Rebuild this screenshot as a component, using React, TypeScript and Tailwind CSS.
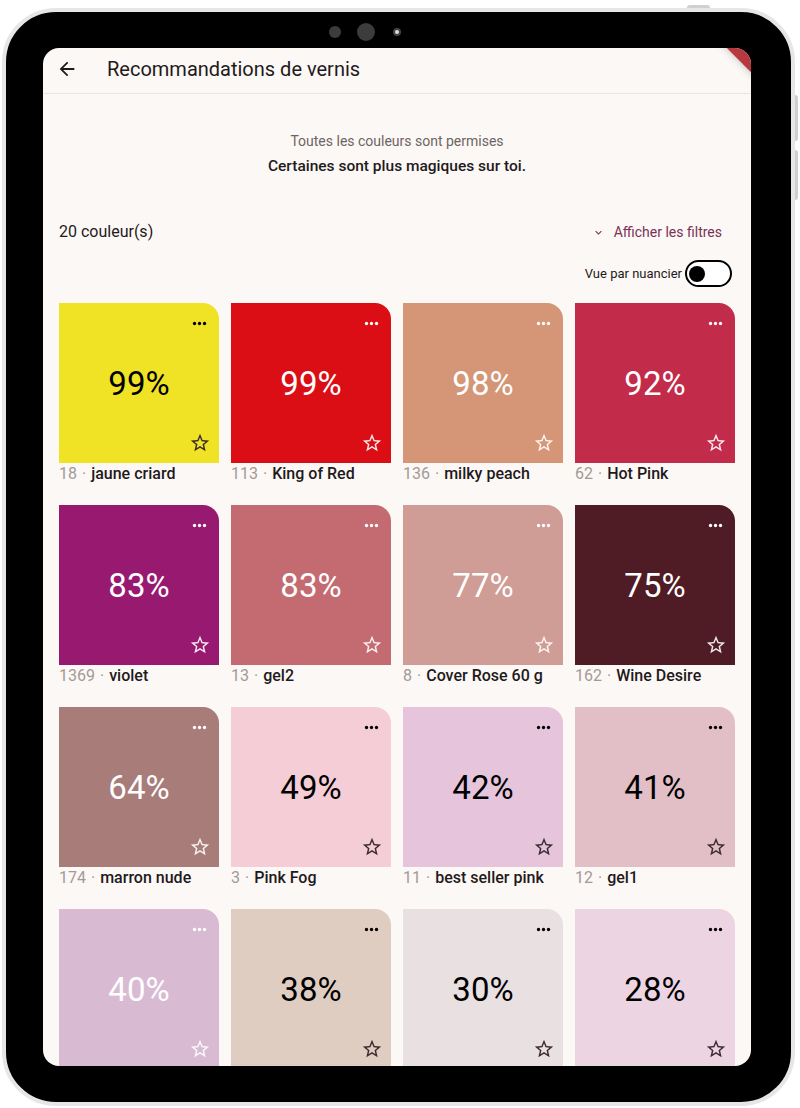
import { useState } from "react";

type Polish = {
  id?: number;
  name?: string;
  score: number;
  color: string;
  light: boolean; // white ink on the swatch
};

const polishes: Polish[] = [
  { id: 18, name: "jaune criard", score: 99, color: "#f0e326", light: false },
  { id: 113, name: "King of Red", score: 99, color: "#da0e14", light: true },
  { id: 136, name: "milky peach", score: 98, color: "#d49677", light: true },
  { id: 62, name: "Hot Pink", score: 92, color: "#c32b4b", light: true },
  { id: 1369, name: "violet", score: 83, color: "#981a70", light: true },
  { id: 13, name: "gel2", score: 83, color: "#c46b72", light: true },
  { id: 8, name: "Cover Rose 60 g", score: 77, color: "#cf9c96", light: true },
  { id: 162, name: "Wine Desire", score: 75, color: "#4f1b24", light: true },
  { id: 174, name: "marron nude", score: 64, color: "#a87c79", light: true },
  { id: 3, name: "Pink Fog", score: 49, color: "#f5cdd6", light: false },
  { id: 11, name: "best seller pink", score: 42, color: "#e5c4dc", light: false },
  { id: 12, name: "gel1", score: 41, color: "#e2bfc6", light: false },
  { score: 40, color: "#d8bbd3", light: true },
  { score: 38, color: "#dfcdc1", light: false },
  { score: 30, color: "#e9e0e1", light: false },
  { score: 28, color: "#ecd4e2", light: false },
];

function StarOutline({ className }: { className?: string }) {
  return (
    <svg viewBox="0 0 24 24" className={className} fill="currentColor">
      <path d="M22 9.24l-7.19-.62L12 2 9.19 8.63 2 9.24l5.46 4.73L5.82 21 12 17.27 18.18 21l-1.63-7.03L22 9.24zM12 15.4l-3.76 2.27 1-4.28-3.32-2.88 4.38-.38L12 6.1l1.71 4.04 4.38.38-3.32 2.88 1 4.28L12 15.4z" />
    </svg>
  );
}

function MoreDots({ className }: { className?: string }) {
  return (
    <svg viewBox="0 0 18 6" className={className} fill="currentColor">
      <circle cx="3" cy="3" r="2" />
      <circle cx="9" cy="3" r="2" />
      <circle cx="15" cy="3" r="2" />
    </svg>
  );
}

function PolishTile({ p }: { p: Polish }) {
  const ink = p.light ? "text-white" : "text-black";
  const starInk = p.light ? "text-white/90" : "text-[#3b2b30]";
  return (
    <div className="flex flex-col">
      <div
        className="relative flex h-[160px] items-center justify-center rounded-tr-[16px]"
        style={{ background: p.color }}
      >
        <span className={`text-[33px] leading-none ${ink}`}>{p.score}%</span>
        <MoreDots className={`absolute right-[11px] top-[18px] h-[5px] w-[17px] ${ink}`} />
        <StarOutline className={`absolute bottom-[9px] right-[8px] h-[22px] w-[22px] ${starInk}`} />
      </div>
      {p.name && (
        <div className="flex h-[22px] items-center text-[16px] leading-none">
          <span className="text-[#a39a97]">{p.id}</span>
          <span className="mx-[5px] text-[#a39a97]">·</span>
          <span className="font-medium text-[#1f1a1c]">{p.name}</span>
        </div>
      )}
    </div>
  );
}

export default function App() {
  const [swatchView, setSwatchView] = useState(false);

  return (
    <div className="h-[1108px] w-[800px] overflow-hidden bg-white font-['Roboto',sans-serif]">
      <div className="relative ml-[2px] mt-[8px] h-[1098px] w-[793px] rounded-[54px] border-[4px] border-[#e6e6e6] bg-black pb-[36px] pl-[37px] pr-[40px] pt-[36px]">
        {/* hardware buttons */}
        <div className="absolute -top-[7px] right-[81px] h-[3px] w-[23px] rounded-t-sm bg-[#d0d0d0]" />
        <div className="absolute -right-[7px] top-[83px] h-[46px] w-[3px] rounded-r-sm bg-[#cfcfcf]" />
        <div className="absolute -right-[7px] top-[138px] h-[50px] w-[3px] rounded-r-sm bg-[#cfcfcf]" />

        {/* front camera strip */}
        <div className="absolute left-[323px] top-[11px] flex h-[18px] items-center gap-[16px]">
          <div className="h-[12px] w-[12px] rounded-full bg-[#3c3c3c]" />
          <div className="h-[18px] w-[18px] rounded-full bg-[#3c3c3c]" />
          <div className="ml-[2px] flex h-[8px] w-[8px] items-center justify-center rounded-full bg-[#444]">
            <div className="h-[4px] w-[4px] rounded-full bg-[#ddd]" />
          </div>
        </div>

        {/* screen */}
        <div className="relative flex h-full w-full flex-col overflow-hidden rounded-[16px] bg-[#fcf8f5]">
          <div className="pointer-events-none absolute -right-[22px] -top-[8px] h-[20px] w-[60px] rotate-45 bg-[#b8383f] shadow-md" />

          <header className="flex h-[46px] shrink-0 items-center border-b border-[#ece5df] pb-[4px] pl-[13px]">
            <svg viewBox="0 0 24 24" className="h-[22px] w-[22px] text-[#1f1a1c]" fill="currentColor">
              <path d="M20 11H7.83l5.59-5.59L12 4l-8 8 8 8 1.41-1.41L7.83 13H20v-2z" />
            </svg>
            <h1 className="ml-[29px] text-[20px] text-[#1f1a1c]">Recommandations de vernis</h1>
          </header>

          <main className="flex flex-col px-[16px] pt-[38px]">
            <p className="text-center text-[14px] leading-[18px] text-[#6d6563]">
              Toutes les couleurs sont permises
            </p>
            <p className="mt-[7px] text-center text-[15.5px] font-medium leading-[18px] text-[#1f1a1c]">
              Certaines sont plus magiques sur toi.
            </p>

            <div className="mt-[45px] flex items-center justify-between">
              <span className="text-[16px] text-[#1f1a1c]">20 couleur(s)</span>
              <button className="mr-[13px] flex items-center gap-[9px] text-[14px] text-[#7b3155]">
                <svg viewBox="0 0 24 24" className="h-[13px] w-[13px]" fill="currentColor">
                  <path d="M16.59 8.59L12 13.17 7.41 8.59 6 10l6 6 6-6z" />
                </svg>
                Afficher les filtres
              </button>
            </div>

            <div className="mr-[3px] mt-[16px] flex items-center justify-end gap-[3px]">
              <span className="text-[13px] text-[#1f1a1c]">Vue par nuancier</span>
              <button
                onClick={() => setSwatchView((v) => !v)}
                className="flex h-[27px] w-[47px] items-center rounded-full border-[2px] border-black bg-white px-[2px]"
              >
                <span
                  className={`h-[16px] w-[16px] rounded-full bg-black ${swatchView ? "ml-auto" : ""}`}
                />
              </button>
            </div>

            <div className="mt-[16px] grid grid-cols-4 gap-x-[12px] gap-y-[20px]">
              {polishes.map((p, i) => (
                <PolishTile key={i} p={p} />
              ))}
            </div>
          </main>
        </div>
      </div>
    </div>
  );
}
